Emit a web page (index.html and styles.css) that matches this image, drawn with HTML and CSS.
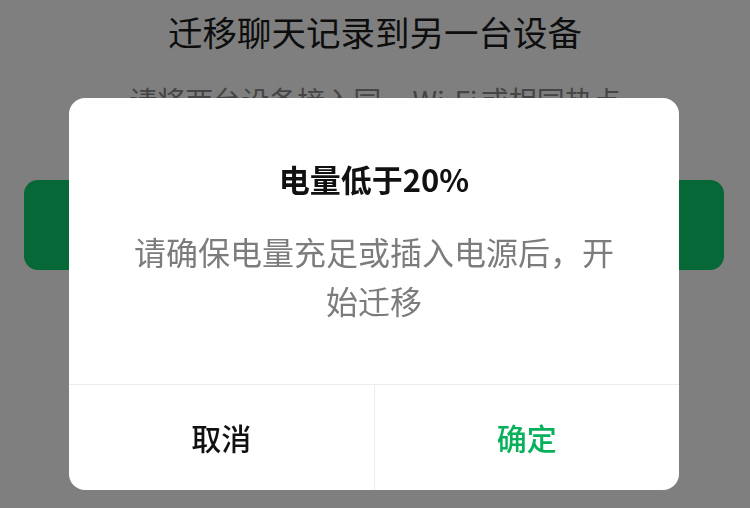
FILE: index.html
```html
<!DOCTYPE html>
<html lang="zh-CN">
<head>
<meta charset="utf-8">
<title>迁移聊天记录</title>
<link rel="stylesheet" href="styles.css">
</head>
<body>
<div class="page">
  <h1 class="page-title">迁移聊天记录到另一台设备</h1>
  <p class="page-sub">请将两台设备接入同一 Wi-Fi 或相同热点</p>
  <div class="primary-btn"></div>
</div>
<div class="mask">
  <div class="dialog">
    <div class="dialog-body">
      <div class="dialog-title">电量低于20%</div>
      <div class="dialog-text">请确保电量充足或插入电源后，开始迁移</div>
    </div>
    <div class="dialog-actions">
      <div class="action action-cancel">取消</div>
      <div class="action action-ok">确定</div>
    </div>
  </div>
</div>
</body>
</html>
```
FILE: styles.css
```css
html, body {
  margin: 0;
  padding: 0;
  width: 750px;
  height: 508px;
  overflow: hidden;
  background: #ffffff;
  font-family: "Noto Sans CJK SC", "Noto Sans", sans-serif;
}
.page {
  display: flex;
  flex-direction: column;
  align-items: center;
  padding-top: 9px;
}
.page-title {
  margin: 0;
  font-size: 34.5px;
  line-height: 44px;
  font-weight: 400;
  color: #1a1a1a;
}
.page-sub {
  margin: 27px 0 0;
  font-size: 28px;
  line-height: 40px;
  color: #8a8a8a;
  word-spacing: -3px;
}
.primary-btn {
  margin-top: 60px;
  width: 700px;
  height: 90px;
  margin-left: -2px;
  border-radius: 14px;
  background: #0ccf6e;
}
.mask {
  position: fixed;
  inset: 0;
  background: rgba(0, 0, 0, 0.5);
}
.dialog {
  position: absolute;
  left: 69px;
  top: 98px;
  width: 610px;
  height: 392px;
  background: #ffffff;
  border-radius: 16px;
  display: flex;
  flex-direction: column;
  overflow: hidden;
}
.dialog-body {
  flex: 1;
  display: flex;
  flex-direction: column;
  align-items: center;
  padding: 59px 56px 0;
  text-align: center;
}
.dialog-title {
  font-size: 31px;
  line-height: 44px;
  font-weight: 700;
  color: #111111;
}
.dialog-text {
  margin-top: 26px;
  font-size: 32px;
  line-height: 49px;
  color: #7c7c7c;
}
.dialog-actions {
  height: 105px;
  display: flex;
  border-top: 1px solid #ededed;
}
.action {
  flex: 1;
  display: flex;
  align-items: center;
  justify-content: center;
  font-size: 30px;
  font-weight: 500;
  padding-bottom: 2px;
}
.action-cancel {
  color: #111111;
  border-right: 1px solid #ededed;
}
.action-ok {
  color: #07b05a;
}
```
